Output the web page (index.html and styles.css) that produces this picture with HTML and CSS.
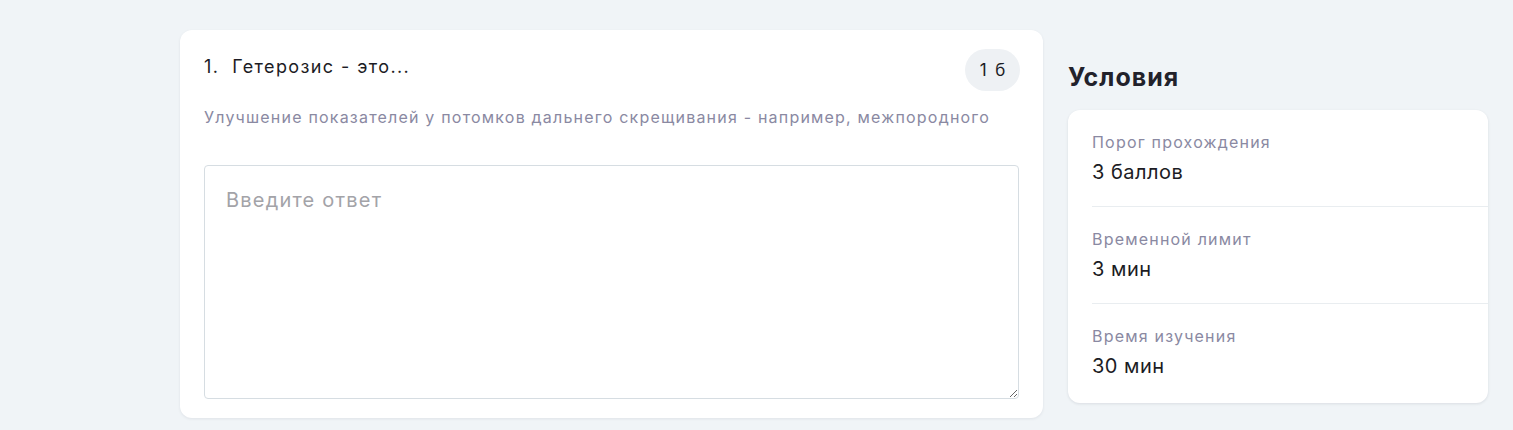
FILE: index.html
```html
<!DOCTYPE html>
<html lang="ru">
<head>
<meta charset="utf-8">
<link rel="stylesheet" href="styles.css">
</head>
<body>
<div class="page">
  <section class="question-card">
    <div class="q-head">
      <div class="q-title">1.&nbsp; Гетерозис - это...</div>
      <div class="q-badge">1 б</div>
    </div>
    <div class="q-desc">Улучшение показателей у потомков дальнего скрещивания - например, межпородного</div>
    <textarea class="q-answer" placeholder="Введите ответ"></textarea>
  </section>
  <aside class="side">
    <h2 class="side-title">Условия</h2>
    <div class="cond-card">
      <div class="cond-item">
        <div class="cond-label">Порог прохождения</div>
        <div class="cond-value">3 баллов</div>
      </div>
      <div class="cond-item">
        <div class="cond-label">Временной лимит</div>
        <div class="cond-value">3 мин</div>
      </div>
      <div class="cond-item">
        <div class="cond-label">Время изучения</div>
        <div class="cond-value">30 мин</div>
      </div>
    </div>
  </aside>
</div>
</body>
</html>
```
FILE: styles.css
```css
* { box-sizing: border-box; }
html, body { margin: 0; padding: 0; }
body {
  background: #f0f4f7;
  font-family: Inter, "Noto Sans", sans-serif;
  color: #1f1f28;
  width: 1513px;
  height: 430px;
  overflow: hidden;
}
.page {
  display: flex;
  align-items: flex-start;
  gap: 25px;
  padding: 30px 25px 0 180px;
}
.question-card {
  width: 863px;
  background: #fff;
  border-radius: 12px;
  padding: 19px 24px 19px 24px;
  box-shadow: 0 1px 3px rgba(20, 30, 50, 0.08);
  display: flex;
  flex-direction: column;
}
.q-head {
  display: flex;
  justify-content: space-between;
  align-items: flex-start;
}
.q-title {
  font-size: 18px;
  line-height: 22px;
  padding-top: 7px;
  letter-spacing: 1.4px;
  color: #1c1c24;
}
.q-badge {
  height: 42px;
  width: 55px;
  border-radius: 21px;
  background: #eef1f4;
  font-size: 17px;
  letter-spacing: 1.9px;
  text-indent: 2px;
  line-height: 42px;
  text-align: center;
  color: #1c1c24;
  margin-right: -1px;
}
.q-desc {
  margin-top: 16px;
  font-size: 16px;
  line-height: 20px;
  letter-spacing: 1.2px;
  color: #8a89a2;
}
.q-answer {
  margin-top: 38px;
  width: 100%;
  height: 234px;
  border: 1px solid #d6dde2;
  border-radius: 4px;
  padding: 21px 21px;
  font-family: Inter, "Noto Sans", sans-serif;
  font-size: 20px;
  line-height: 26px;
  letter-spacing: 1.2px;
  color: #1c1c24;
  resize: vertical;
  outline: none;
  display: block;
}
.q-answer::placeholder { color: #a3a3a8; }
.side {
  width: 420px;
  display: flex;
  flex-direction: column;
}
.side-title {
  margin: 32px 0 18px 0;
  font-size: 25px;
  line-height: 30px;
  font-weight: 700;
  letter-spacing: 1px;
  color: #22222b;
}
.cond-card {
  background: #fff;
  border-radius: 12px;
  box-shadow: 0 1px 3px rgba(20, 30, 50, 0.1);
  padding-left: 24px;
}
.cond-item {
  padding: 22px 0 21px 0;
  border-bottom: 1px solid #e9edf0;
}
.cond-item:last-child { border-bottom: none; padding-bottom: 24px; }
.cond-label {
  font-size: 16px;
  line-height: 20px;
  letter-spacing: 1.2px;
  color: #8a89a2;
}
.cond-value {
  margin-top: 7px;
  font-size: 20px;
  line-height: 26px;
  letter-spacing: 0.5px;
  color: #1c1c24;
}
```
